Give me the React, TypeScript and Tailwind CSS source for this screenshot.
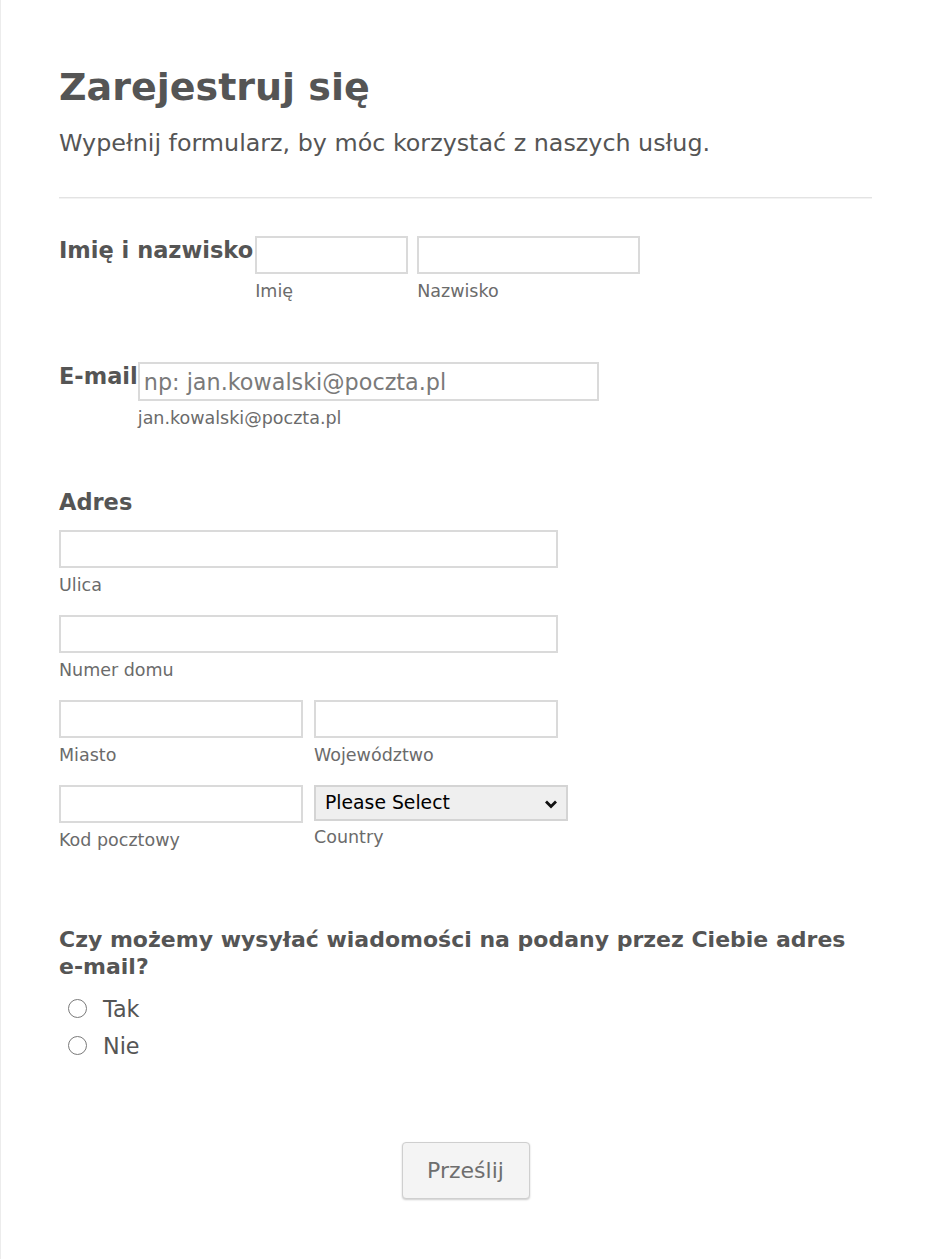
import React from "react";

const font = { fontFamily: '"DejaVu Sans", Verdana, sans-serif' };

function Field({ w, label }: { w: string; label: string }) {
  return (
    <div className="flex flex-col">
      <div className={`${w} h-[38px] border-2 border-[#dadada] bg-white`} />
      <span className="mt-[5px] text-[17.5px] leading-[24px] text-[#6b6b6b]">{label}</span>
    </div>
  );
}

function Radio({ label }: { label: string }) {
  return (
    <div className="flex h-[37px] items-center">
      <span className="ml-[9px] mr-[16px] inline-block h-[19px] w-[19px] rounded-full border border-[#7a7a7a] bg-white" />
      <span className="text-[22.3px] leading-[28px] text-[#555]">{label}</span>
    </div>
  );
}

export default function App() {
  return (
    <div className="min-h-[1259px] border-l border-[#ececec] bg-white" style={font}>
      <div className="pl-[58px] pr-[58px] pt-[64px] pb-[59px]">
        <h1 className="text-[38px] font-bold leading-[46px] text-[#555]">Zarejestruj się</h1>
        <p className="mt-[16px] text-[23.8px] leading-[34px] text-[#555]">
          Wypełnij formularz, by móc korzystać z naszych usług.
        </p>
        <div className="mt-[37px] h-[2px] border-t border-[#e3e3e3] bg-[#f3f3f3]" />

        {/* Name row */}
        <div className="mt-[37px] flex items-start">
          <span className="text-[22.5px] font-bold leading-[28px] text-[#555]">Imię i nazwisko</span>
          <div className="ml-[2px] flex gap-[9px]">
            <Field w="w-[153px]" label="Imię" />
            <Field w="w-[223px]" label="Nazwisko" />
          </div>
        </div>

        {/* Email row */}
        <div className="mt-[59px] flex items-start">
          <span className="text-[22.5px] font-bold leading-[28px] text-[#555]">E-mail</span>
          <div className="flex flex-col">
            <input
              className="h-[39px] w-[461px] border-2 border-[#dadada] bg-white px-[4px] text-[22.3px] text-[#555] outline-none placeholder:text-[#7a7a7a]"
              style={font}
              placeholder="np: jan.kowalski@poczta.pl"
            />
            <span className="mt-[5px] text-[17.5px] leading-[24px] text-[#6b6b6b]">jan.kowalski@poczta.pl</span>
          </div>
        </div>

        {/* Address */}
        <div className="mt-[58px] text-[22.5px] font-bold leading-[28px] text-[#555]">Adres</div>
        <div className="mt-[14px] flex flex-col gap-[18px]">
          <Field w="w-[499px]" label="Ulica" />
          <Field w="w-[499px]" label="Numer domu" />
          <div className="flex gap-[11px]">
            <Field w="w-[244px]" label="Miasto" />
            <Field w="w-[244px]" label="Województwo" />
          </div>
          <div className="flex items-start gap-[11px]">
            <Field w="w-[244px]" label="Kod pocztowy" />
            <div className="flex flex-col">
              <div className="flex h-[36px] w-[254px] items-center justify-between border-2 border-[#d4d4d4] bg-[#efefef] pl-[9px] pr-[8px]">
                <span className="text-[18.8px] leading-[24px] text-black">Please Select</span>
                <svg width="14" height="10" viewBox="0 0 14 10" className="mt-[1px]">
                  <polyline points="2,2.5 7,7.5 12,2.5" fill="none" stroke="#111" strokeWidth="2.8" />
                </svg>
              </div>
              <span className="mt-[4px] text-[17.5px] leading-[24px] text-[#6b6b6b]">Country</span>
            </div>
          </div>
        </div>

        {/* Question */}
        <div className="mt-[74px] text-[22px] font-bold leading-[27px] text-[#555]">
          Czy możemy wysyłać wiadomości na podany przez Ciebie adres e-mail?
        </div>
        <div className="mt-[10px] flex flex-col">
          <Radio label="Tak" />
          <Radio label="Nie" />
        </div>

        {/* Submit */}
        <div className="mt-[78px] flex justify-center">
          <button
            className="h-[57px] w-[128px] rounded-[4px] border border-[#cfcfcf] bg-[#f4f4f4] text-[22px] text-[#6e6e6e] shadow-[0_1px_2px_rgba(0,0,0,0.2)]"
            style={font}
          >
            Prześlij
          </button>
        </div>
      </div>
    </div>
  );
}
